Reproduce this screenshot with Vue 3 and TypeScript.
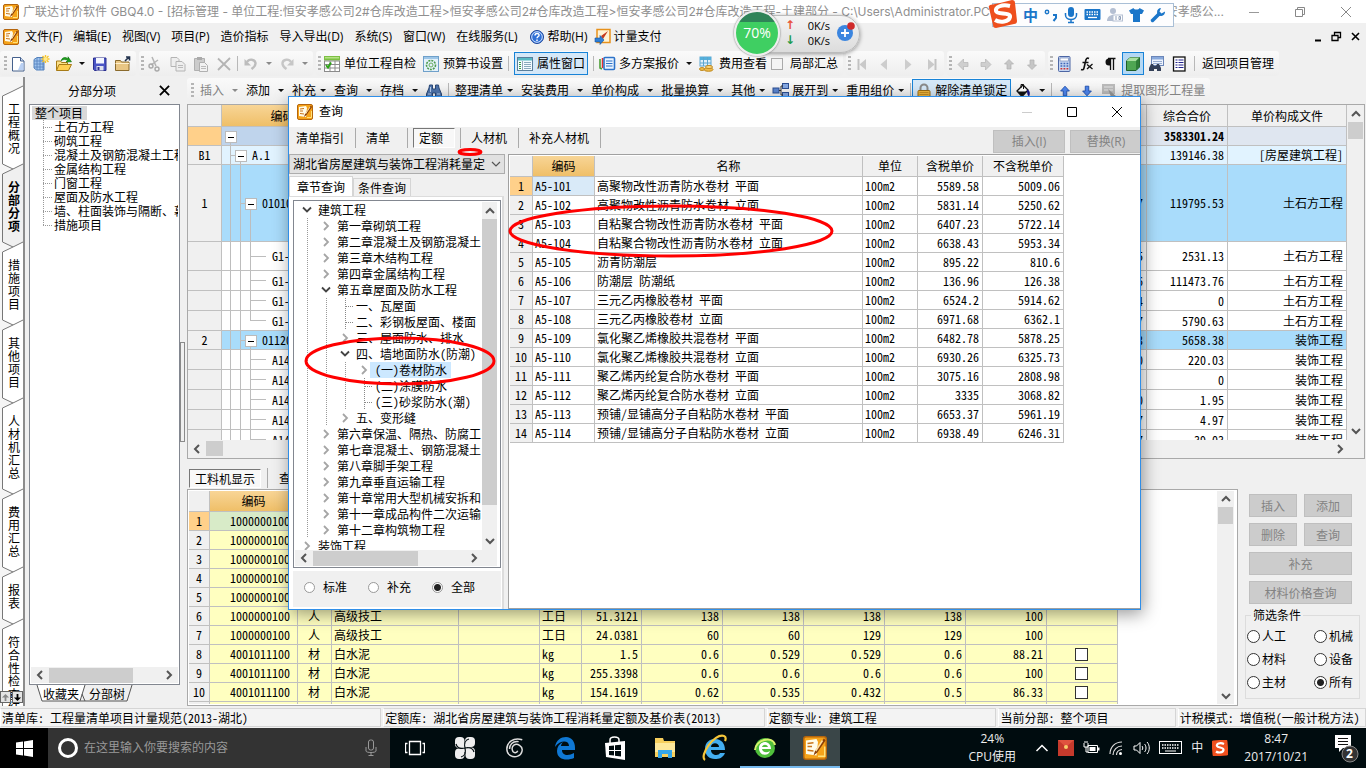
<script setup lang="ts">
import { ref } from 'vue'

const icons: Record<string, string> = {
  app: '<rect x="0.5" y="0.5" width="15" height="15" rx="1.5" fill="#f5a31a" stroke="#b5650c"/><path d="M2 3l7-1 1 2-1 9-7-1z" fill="#fffbe8"/><path d="M3 5l4-.5M3 7l3 0M3 9.500l4 .5" stroke="#c8741a" stroke-width="1"/><path d="M14 1.500l-6 8.500-1 3 2.500-2L15 3z" fill="#8a3f08"/><path d="M13 3l-4.500 7" stroke="#ffe0a0" stroke-width="1"/><path d="M10 13.500h4.500V7" stroke="#ffe27a" fill="none"/>',
  doc: '<path d="M2.500 1.500h8l3.500 3.500v10h-11.500z" fill="#fff" stroke="#44608c"/><path d="M10.500 1.500v3.500H14" fill="#cfdcf2" stroke="#44608c"/><path d="M11 7h2.500v7H8z" fill="#b9d0f3"/>',
  grid: '<path d="M1 3.500l3-2h7v12.500H3.500L1 12z" fill="#9fc4ee" stroke="#5482bd"/><path d="M4 2v12M7 2v12M10 2v12M1 5h10M1 8h10M1 11h10" stroke="#5482bd" stroke-width=".8"/><path d="M12.500-1v8M8.500 3h8M9.500 0l6 6M15.500 0l-6 6" stroke="#f7c52c" stroke-width="1.400"/><circle cx="12.500" cy="3" r="2" fill="#ffe98a"/>',
  open: '<path d="M0.500 5h4l1 1.500h6V14H.5z" fill="#fbe08a" stroke="#a77b16"/><path d="M3 8.500h12.500L12.500 14.500H.5z" fill="#ffcf52" stroke="#a77b16"/><path d="M5 5c1-4 5-4.500 7-2V.8l3.500 5-5.500.2 1.500-1.500C10 3 7 3 5 5z" fill="#1ea01e" stroke="#0c700c" stroke-width=".6"/>',
  save: '<path d="M1.500 2h12.500v12.500H2.500l-1-1z" fill="#4a55c5" stroke="#2b2f8f"/><rect x="4" y="2" width="8" height="5.500" fill="#f4f6ff"/><rect x="4.500" y="10" width="7" height="4.500" fill="#dfe2ee"/><rect x="5.500" y="11" width="2" height="3" fill="#2b2f8f"/>',
  folder: '<path d="M.5 4.500h5l1 1.500h7.500v8.500H.5z" fill="#e9c684" stroke="#8a6a2c"/><path d="M.5 7.500h13.500" stroke="#fff0cc"/><path d="M10 5l4-4M11 1h3.500v3.500" stroke="#24344f" stroke-width="1.600" fill="none"/>',
  cut: '<path d="M5 1l4 9M11 4L4 9" stroke="#b4b4b4" stroke-width="1.500"/><circle cx="4" cy="10" r="2" fill="none" stroke="#a9a9a9" stroke-width="1.400"/><circle cx="10" cy="13" r="2" fill="none" stroke="#a9a9a9" stroke-width="1.400"/>',
  copy: '<path d="M1 1.500h6l2 2v7H1z" fill="#eee" stroke="#b4b4b4"/><path d="M6 5.500h6l3 3v6.500H6z" fill="#eee" stroke="#b4b4b4"/><path d="M8 9.500h5M8 11.500h5" stroke="#bbb"/>',
  paste: '<path d="M1.500 2.500h10v12h-10z" fill="#ccc" stroke="#b0b0b0"/><rect x="4" y="1" width="5" height="3" fill="#aaa"/><path d="M6.500 6.500h5l3 3v6h-8z" fill="#f2f2f2" stroke="#b0b0b0"/><path d="M8 10.500h5M8 12.500h5" stroke="#bbb"/>',
  del: '<path d="M2 2.500l12 11.500M14 2L2 14" stroke="#b4b4b4" stroke-width="1.800"/>',
  undo: '<path d="M4 6c2-3.500 8-3 8.500 1 .3 3-2 4.500-4 6" fill="none" stroke="#bdbdbd" stroke-width="2.400"/><path d="M1.500 3v6.500h6.500z" fill="#bdbdbd"/>',
  redo: '<path d="M12 6c-2-3.500-8-3-8.500 1-.3 3 2 4.500 4 6" fill="none" stroke="#c6c6c6" stroke-width="2.400"/><path d="M14.500 3v6.500h-6.500z" fill="#c6c6c6"/>',
  check: '<rect x="0" y="0" width="16" height="4.500" fill="#7cc043"/><rect x="1" y="1" width="14" height="1.500" fill="#b5e285"/><rect x=".5" y="5" width="15" height="10.500" fill="#fff" stroke="#8b8b8b"/><path d="M6 5v11M11 5v11M0 8.500h16M0 12h16" stroke="#8b8b8b"/><path d="M2 9l2 2.500L7 6.500" stroke="#2ea318" stroke-width="2" fill="none"/>',
  gear: '<rect x=".5" y=".5" width="15" height="15" fill="#e4f1fb" stroke="#6fa0ca"/><rect x="1" y="1" width="14" height="2" fill="#9dc6e8"/><circle cx="8" cy="9" r="4.500" fill="none" stroke="#4c9c4c" stroke-width="1.600" stroke-dasharray="2 1"/><circle cx="8" cy="9" r="2" fill="none" stroke="#66ad5a"/>',
  prop: '<rect x=".5" y="1.500" width="15" height="13" fill="#f4fbff" stroke="#5a7f9c"/><rect x="1" y="2" width="14" height="2.500" fill="#57b9c4"/><path d="M5.500 5v9" stroke="#9ab"/><path d="M2 6.500h2M2 8.500h2M2 10.500h2M2 12.500h2" stroke="#399b46"/><path d="M7 6.500h7M7 8.500h7M7 10.500h7M7 12.500h7" stroke="#8aa9bd"/>',
  multi: '<path d="M1 3v9l2 1" stroke="#4b9e35" stroke-width="1.600" fill="none"/><path d="M3.500 2v10" stroke="#d33" stroke-width="1.500"/><rect x="5" y="1.500" width="10.500" height="12" rx="1" fill="#eaf4ff" stroke="#2d73c9" stroke-width="1.600"/><path d="M7 5h6.500M7 7.500h6.500M7 10h6.500" stroke="#2d73c9" stroke-width="1.200"/>',
  fee: '<rect x="1" y="1" width="11" height="9" fill="#dff0fb" stroke="#5ca6cf"/><rect x="1" y="1" width="11" height="3" fill="#54b0dc"/><path d="M4.500 1v9M8.500 1v9M1 7h11" stroke="#5ca6cf"/><ellipse cx="9.500" cy="13.500" rx="4.500" ry="1.800" fill="#efbb4a" stroke="#c08a20"/><ellipse cx="10" cy="11" rx="3.500" ry="1.600" fill="#f8d277" stroke="#c08a20"/><ellipse cx="3" cy="13" rx="2.500" ry="1.500" fill="#efbb4a" stroke="#c08a20"/>',
  first: '<path d="M4.500 3v11" stroke="#c2c2c2" stroke-width="2"/><path d="M12 3v11L5.500 8.500z" fill="#c9c9c9"/>',
  prev: '<path d="M10 3v11L3.500 8.500z" fill="#cdcdcd"/>',
  next: '<path d="M5 3v11l6.500-5.500z" fill="#cdcdcd"/>',
  last: '<path d="M12.500 3v11" stroke="#c2c2c2" stroke-width="2"/><path d="M5 3v11l6.500-5.500z" fill="#c9c9c9"/>',
  aleft: '<path d="M8.500 3v3.500H13v4H8.500V14L3 8.500z" fill="#cfcfcf" stroke="#b5b5b5" stroke-width=".7"/>',
  aright: '<path d="M7.500 3v3.500H3v4h4.500V14L13 8.500z" fill="#cfcfcf" stroke="#b5b5b5" stroke-width=".7"/>',
  aup: '<path d="M8 3.500l4.500 4.500h-2.500v5H6V8H3.500z" fill="#c6c6c6" stroke="#b0b0b0" stroke-width=".7"/>',
  adown: '<path d="M8 13.500l4.500-4.500h-2.500V4H6v5H3.500z" fill="#c6c6c6" stroke="#b0b0b0" stroke-width=".7"/>',
  calc: '<rect x="2.500" y=".5" width="11.500" height="15" rx="1" fill="#c6d6f2" stroke="#4c66a4"/><rect x="4" y="2" width="8.500" height="3" fill="#fff" stroke="#6f87ba" stroke-width=".7"/><path d="M4.500 7.500h8M4.500 10h8" stroke="#3f66b8" stroke-width="1.400" stroke-dasharray="1.800 1.200"/><path d="M4.500 12.800h8" stroke="#c33" stroke-width="1.400" stroke-dasharray="1.800 1.200"/>',
  fx: '<path d="M10 2.500c-2-1-3 0-3.500 3L5 12c-.5 2-1.500 2-3 1.500M3.500 6.500h6" fill="none" stroke="#111" stroke-width="1.600"/><path d="M8 8.500l5.500 4.500M13.500 8l-5.500 5" stroke="#111" stroke-width="1.300"/>',
  para: '<path d="M13 2.500H7a3.500 3.500 0 0 0 0 7h1V3z" fill="#111"/><path d="M8.500 3v11M11.500 3v11M6 2.500h7.500" stroke="#111" stroke-width="1.300"/>',
  cube: '<path d="M1.500 5l3.500-3.500h9.500v9.500L11 14.500H1.500z" fill="#4fa653" stroke="#1e5f28"/><path d="M1.500 5H11l3.500-3.500H5z" fill="#a8dfa0"/><path d="M11 5v9.500l3.500-3.500V1.500z" fill="#2e7d38"/>',
  find: '<rect x="3.500" y=".5" width="12" height="9" fill="#eef3fc" stroke="#6b86b8"/><rect x="4" y="1" width="11" height="2.500" fill="#88a9dc"/><path d="M5 5.500h9M5 7.500h9" stroke="#97acd0"/><path d="M1 12l2-4h2l1 2h2l1-2h2l2 4v3H9v-2H6v2H1z" fill="#333f57"/>',
  list: '<rect x="2.500" y="1" width="11.500" height="14" fill="#fff" stroke="#111" stroke-width="1.300"/><path d="M4.500 4h2M4.500 6.500h2M4.500 9h2M4.500 11.500h2M7.500 4h5M7.500 6.500h5M7.500 9h5M7.500 11.500h5" stroke="#23238c" stroke-width="1.200"/>',
  bino: '<path d="M3.500 2h3v4h3V2h3l.5 3L15.500 11v3.500h-6V10h-3v4.500h-6V11L3 5z" fill="#4e74ad" stroke="#2a4876"/><path d="M2 11h3M11 11h3M4.500 4v5" stroke="#b9d0ef"/>',
  tree: '<rect x="0" y="5" width="6" height="5" fill="#5b86d1" stroke="#2d4f93"/><rect x="9.500" y=".5" width="6" height="5" fill="#86a9e4" stroke="#2d4f93"/><rect x="9.500" y="9.500" width="6" height="5" fill="#86a9e4" stroke="#2d4f93"/><path d="M6 7.500h2M8 3v9M8 3h2M8 12h2" stroke="#333"/>',
  lock: '<path d="M4.500 8V5a3.500 3.500 0 0 1 7 0v3" fill="none" stroke="#8a8a8a" stroke-width="2"/><rect x="2" y="7.500" width="12" height="8" rx="1" fill="#f0b63c" stroke="#9a6b12"/><path d="M3.500 9.500h9M3.500 11.500h9M3.500 13.500h9" stroke="#c68d20"/>',
  bucket: '<path d="M2 8l6-6 5 5-6 6.500z" fill="#fff" stroke="#111" stroke-width="1.300"/><path d="M6 5V1.500h2.500V6" stroke="#111" fill="none"/><path d="M12 6.500c3 1 3.500 4 2 7-1.500-1-2-3-2-7z" fill="#16168c"/><path d="M2.500 8.500h9L7 13z" fill="#111"/>',
  bup: '<path d="M8 2.500l5 5.500h-3v5.500H6V8H3z" fill="#4e86ee" stroke="#1c4dab"/>',
  bdown: '<path d="M8 13.500L13 8h-3V2.500H6V8H3z" fill="#4e86ee" stroke="#1c4dab"/>',
  pick: '<rect x="0" y="1" width="13" height="10" fill="#bbb"/><path d="M2 4h9M2 7h9" stroke="#e8e8e8"/><path d="M6 6l9 8h-6z" fill="#999"/>',
  help: '<circle cx="8" cy="8" r="6.500" fill="#2f70d6" stroke="#1b459a"/><circle cx="8" cy="8" r="5.300" fill="none" stroke="#cfe1ff"/><path d="M6 6.500c0-3 4.500-2.500 4 0-.3 1-2 1.200-2 2.800M8 10.500v1.500" stroke="#fff" stroke-width="1.500" fill="none"/>',
  pay: '<rect x="2" y=".5" width="13" height="13" fill="#fff3d5" stroke="#e7911b" stroke-width="1.500"/><path d="M4 4l2 3 7-5-5 8z" fill="#c63a1c"/><path d="M0 9h5V6.500l4 4.500-4 4.500V13H0z" fill="#2d7fd8" stroke="#15509b" stroke-width=".6"/>'
}

interface Item { k: 'icon' | 'text' | 'arrow' | 'sep' | 'btn' | 'check'; icon?: string; text?: string; cls?: string }
const ic = (icon: string, cls = ''): Item => ({ k: 'icon', icon, cls })
const tx = (text: string, icon = '', cls = ''): Item => ({ k: 'text', text, icon, cls })
const ar = (cls = ''): Item => ({ k: 'arrow', cls })
const sp: Item = { k: 'sep' }

const bars: Item[][] = [
  [ic('doc'), ic('grid'), ic('open'), ar(), ic('save'), ic('folder')],
  [ic('cut'), ic('copy'), ic('paste'), ic('del'), sp, ic('undo'), ar('dim'), ic('redo'), ar('dim')],
  [tx('单位工程自检', 'check'), tx('预算书设置', 'gear'), sp, { k: 'btn', icon: 'prop', text: '属性窗口' }, sp, tx('多方案报价', 'multi'), ar(), tx('费用查看', 'fee'), { k: 'check', text: '局部汇总' }],
  [ic('first'), ic('prev'), ic('next'), ic('last')],
  [ic('aleft'), ic('aright'), ic('aup'), ic('adown')],
  [ic('calc'), ic('fx'), ic('para'), { k: 'btn', icon: 'cube', cls: 'sq' }, ic('find'), ic('list'), { k: 'sep', cls: 'far' }, tx('返回项目管理')]
]
const editBar: Item[] = [
  tx('插入', '', 'gray'), ar('mid'), tx('添加'), ar(), tx('补充'), ar('tight'), tx('查询'), ar(), tx('存档'), ar(), ic('bino'), sp,
  tx('整理清单'), ar('tight'), tx('安装费用'), ar(), tx('单价构成'), ar(), tx('批量换算'), ar(), tx('其他'), ar('tight'),
  tx('展开到', 'tree'), ar('tight'), tx('重用组价'), ar('tight'), sp, { k: 'btn', icon: 'lock', text: '解除清单锁定', cls: 'lockbtn' },
  ic('bucket'), ar(), sp, ic('bup', 'small'), ic('bdown', 'small'), tx('提取图形工程量', 'pick', 'gray')
]

const menusA = ['文件(F)', '编辑(E)', '视图(V)', '项目(P)', '造价指标', '导入导出(D)', '系统(S)', '窗口(W)', '在线服务(L)']
const sideTabs = ['工程概况', '分部分项', '措施项目', '其他项目', '人材机汇总', '费用汇总', '报表', '符合性检查结果']
const parts = ['土石方工程', '砌筑工程', '混凝土及钢筋混凝土工程', '金属结构工程', '门窗工程', '屋面及防水工程', '墙、柱面装饰与隔断、幕墙', '措施项目']

interface Row { no: string; h: number; cls: string; lvl: number; code: string; tail: string; sum: string; file: string; last?: boolean }
const upper: Row[] = [
  { no: '', h: 19, cls: 'total', lvl: 0, code: '', tail: '', sum: '3583301.24', file: '' },
  { no: 'B1', h: 19, cls: 'pale', lvl: 1, code: 'A.1', tail: '', sum: '139146.38', file: '[房屋建筑工程]' },
  { no: '1', h: 77, cls: 'blue', lvl: 2, code: '010101', tail: '7', sum: '119795.53', file: '土石方工程' },
  { no: '', h: 29, cls: '', lvl: 3, code: 'G1-1', tail: '5', sum: '2531.13', file: '土石方工程' },
  { no: '', h: 20, cls: '', lvl: 3, code: 'G1-2', tail: '6', sum: '111473.76', file: '土石方工程' },
  { no: '', h: 20, cls: '', lvl: 3, code: 'G1-3', tail: '4', sum: '0', file: '土石方工程' },
  { no: '', h: 20, cls: '', lvl: 3, code: 'G1-4', tail: '7', sum: '5790.63', file: '土石方工程', last: true },
  { no: '2', h: 19, cls: 'blue', lvl: 2, code: '011201', tail: '3', sum: '5658.38', file: '装饰工程' },
  { no: '', h: 20, cls: '', lvl: 3, code: 'A14-1', tail: '0', sum: '220.03', file: '装饰工程' },
  { no: '', h: 20, cls: '', lvl: 3, code: 'A14-2', tail: '', sum: '0', file: '装饰工程' },
  { no: '', h: 20, cls: '', lvl: 3, code: 'A14-3', tail: '0', sum: '1.95', file: '装饰工程' },
  { no: '', h: 20, cls: '', lvl: 3, code: 'A14-4', tail: '7', sum: '4.97', file: '装饰工程' },
  { no: '', h: 20, cls: '', lvl: 3, code: 'A14-5', tail: '7', sum: '39.03', file: '装饰工程', last: true }
]

const hidden = (): string[] => ['1000000100', '', '', '', '', '', '', '', '', '', '']
const lower: { cells: string[]; box: boolean }[] = [
  ...[1, 2, 3, 4, 5].map(() => ({ cells: hidden(), box: false })),
  { cells: ['1000000100', '人', '高级技工', '', '工日', '51.3121', '138', '138', '138', '138', '100'], box: false },
  { cells: ['1000000100', '人', '高级技工', '', '工日', '24.0381', '60', '60', '129', '129', '100'], box: false },
  { cells: ['4001011100', '材', '白水泥', '', 'kg', '1.5', '0.6', '0.529', '0.529', '0.6', '88.21'], box: true },
  { cells: ['4001011100', '材', '白水泥', '', 'kg', '255.3398', '0.6', '0.6', '0.6', '0.6', '100'], box: true },
  { cells: ['4001011100', '材', '白水泥', '', 'kg', '154.1619', '0.62', '0.535', '0.432', '0.5', '86.33'], box: true },
  { cells: ['', '', '', '', '', '', '', '', '', '', ''], box: false }
]

interface Node { t: string; lvl: number; s: 'open' | 'shut' | 'leaf'; sel?: boolean }
const nodes: Node[] = [
  { t: '建筑工程', lvl: 0, s: 'open' },
  { t: '第一章砌筑工程', lvl: 1, s: 'shut' },
  { t: '第二章混凝土及钢筋混凝土', lvl: 1, s: 'shut' },
  { t: '第三章木结构工程', lvl: 1, s: 'shut' },
  { t: '第四章金属结构工程', lvl: 1, s: 'shut' },
  { t: '第五章屋面及防水工程', lvl: 1, s: 'open' },
  { t: '一、瓦屋面', lvl: 2, s: 'leaf' },
  { t: '二、彩钢板屋面、楼面', lvl: 2, s: 'leaf' },
  { t: '三、屋面防水、排水', lvl: 2, s: 'shut' },
  { t: '四、墙地面防水(防潮)', lvl: 2, s: 'open' },
  { t: '(一)卷材防水', lvl: 3, s: 'shut', sel: true },
  { t: '(二)涂膜防水', lvl: 3, s: 'leaf' },
  { t: '(三)砂浆防水(潮)', lvl: 3, s: 'leaf' },
  { t: '五、变形缝', lvl: 2, s: 'shut' },
  { t: '第六章保温、隔热、防腐工', lvl: 1, s: 'shut' },
  { t: '第七章混凝土、钢筋混凝土', lvl: 1, s: 'shut' },
  { t: '第八章脚手架工程', lvl: 1, s: 'shut' },
  { t: '第九章垂直运输工程', lvl: 1, s: 'shut' },
  { t: '第十章常用大型机械安拆和', lvl: 1, s: 'shut' },
  { t: '第十一章成品构件二次运输', lvl: 1, s: 'shut' },
  { t: '第十二章构筑物工程', lvl: 1, s: 'shut' },
  { t: '装饰工程', lvl: 0, s: 'shut' }
]

const quota: [string, string, string, string][] = [
  ['A5-101', '高聚物改性沥青防水卷材 平面', '5589.58', '5009.06'],
  ['A5-102', '高聚物改性沥青防水卷材 立面', '5831.14', '5250.62'],
  ['A5-103', '自粘聚合物改性沥青防水卷材 平面', '6407.23', '5722.14'],
  ['A5-104', '自粘聚合物改性沥青防水卷材 立面', '6638.43', '5953.34'],
  ['A5-105', '沥青防潮层', '895.22', '810.6'],
  ['A5-106', '防潮层 防潮纸', '136.96', '126.38'],
  ['A5-107', '三元乙丙橡胶卷材 平面', '6524.2', '5914.62'],
  ['A5-108', '三元乙丙橡胶卷材 立面', '6971.68', '6362.1'],
  ['A5-109', '氯化聚乙烯橡胶共混卷材 平面', '6482.78', '5878.25'],
  ['A5-110', '氯化聚乙烯橡胶共混卷材 立面', '6930.26', '6325.73'],
  ['A5-111', '聚乙烯丙纶复合防水卷材 平面', '3075.16', '2808.98'],
  ['A5-112', '聚乙烯丙纶复合防水卷材 立面', '3335', '3068.82'],
  ['A5-113', '预铺/显铺高分子自粘防水卷材 平面', '6653.37', '5961.19'],
  ['A5-114', '预铺/显铺高分子自粘防水卷材 立面', '6938.49', '6246.31']
]

const dlgTabs = ['清单指引', '清单', '定额', '人材机', '补充人材机']
const scope = ref('全部')
const filter = ref('所有')
const filters = ['人工', '机械', '材料', '设备', '主材', '所有']
const status = ['清单库: 工程量清单项目计量规范(2013-湖北)', '定额库: 湖北省房屋建筑与装饰工程消耗量定额及基价表(2013)', '定额专业: 建筑工程', '当前分部: 整个项目', '计税模式: 增值税(一般计税方法)']
const tabHeight = (t: string): number => t.length * 13 + 26
</script>

<template>
  <div class="app">
    <header class="title">
      <svg class="ic" viewBox="0 0 16 16" v-html="icons.app"></svg>
      <span class="title-main">广联达计价软件 GBQ4.0 - [招标管理 - 单位工程:恒安孝感公司2#仓库改造工程&gt;恒安孝感公司2#仓库改造工程&gt;恒安孝感公司2#仓库改造工程-土建部分 - C:\Users\Administrator.PC</span>
      <span class="title-end">安孝感公...</span>
      <span class="wbtns">
        <button aria-label="最小化"><svg viewBox="0 0 12 12"><path d="M1 6.500h10" stroke="#999" /></svg></button>
        <button aria-label="还原"><svg viewBox="0 0 12 12"><path d="M1.500 3.500h7v7h-7zM3.500 3.500v-2h7v7h-2" fill="none" stroke="#888" /></svg></button>
        <button aria-label="关闭"><svg viewBox="0 0 12 12"><path d="M1 1l10 10M11 1L1 11" stroke="#888" /></svg></button>
      </span>
    </header>

    <nav class="menu">
      <svg class="ic" viewBox="0 0 16 16" v-html="icons.app"></svg>
      <button v-for="m in menusA" :key="m">{{ m }}</button>
      <button><svg class="ic" viewBox="0 0 16 16" v-html="icons.help"></svg>帮助(H)</button>
      <button class="pay"><svg class="ic" viewBox="0 0 16 16" v-html="icons.pay"></svg>计量支付</button>
      <span class="mdi">
        <svg viewBox="0 0 48 12"><path d="M3 9.500h6" stroke="#000" stroke-width="2" /><path d="M20 4.500h6v5h-6zM22.500 4V1.500h6v5h-2" fill="none" stroke="#000" stroke-width="1.300" /><path d="M40 2l7 7M47 2l-7 7" stroke="#000" stroke-width="1.600" /></svg>
      </span>
    </nav>

    <div class="bar">
      <div v-for="(g, gi) in bars" :key="gi" class="grp">
        <i class="grip"></i>
        <template v-for="(it, i) in g" :key="i">
          <button v-if="it.k === 'icon'" class="tool" :aria-label="it.icon"><svg class="ic" viewBox="0 0 16 16" v-html="icons[it.icon!]"></svg></button>
          <button v-else-if="it.k === 'text'" class="tool"><svg v-if="it.icon" class="ic" viewBox="0 0 16 16" v-html="icons[it.icon]"></svg>{{ it.text }}</button>
          <button v-else-if="it.k === 'btn'" class="tool on" :class="it.cls" :aria-label="it.icon"><svg class="ic" viewBox="0 0 16 16" v-html="icons[it.icon!]"></svg>{{ it.text }}</button>
          <label v-else-if="it.k === 'check'" class="chk"><input type="checkbox" />{{ it.text }}</label>
          <i v-else :class="[it.k, it.cls]"></i>
        </template>
      </div>
    </div>

    <div class="body">
      <aside class="side">
        <button v-for="(t, i) in sideTabs" :key="t" class="stab" :class="{ cur: i === 1 }" :style="{ height: tabHeight(t) + 'px' }">
          <svg width="25" :height="tabHeight(t)"><path :d="`M23 -5L13 0L2.500 5V${tabHeight(t) - 5}L13 ${tabHeight(t)}L23 ${tabHeight(t) + 5}`" /></svg>
          <span>{{ t }}</span>
        </button>
        <div class="nudge"><button disabled aria-label="上"><svg viewBox="0 0 10 10"><path d="M5 1l4 4H6v4H4V5H1z" fill="#888" /></svg></button><button aria-label="下"><svg viewBox="0 0 10 10"><path d="M5 9l4-4H6V1H4v4H1z" /></svg></button></div>
      </aside>

      <section class="parts">
        <div class="parts-head"><span>分部分项</span><button aria-label="关闭"><svg viewBox="0 0 12 12"><path d="M1 1l10 10M11 1L1 11" stroke="#000" stroke-width="2" /></svg></button></div>
        <div class="parts-box">
          <ul class="ptree">
            <li class="root"><span>整个项目</span></li>
            <li v-for="p in parts" :key="p">{{ p }}</li>
          </ul>
          <div class="hs"><svg class="ch" viewBox="0 0 8 8"><path d="M6 0L2 4l4 4" /></svg><i class="th1"></i><svg class="ch" viewBox="0 0 8 8"><path d="M2 0l4 4-4 4" /></svg></div>
        </div>
        <div class="ptabs">
          <svg width="110" height="18"><path d="M51 16h47l5-16" fill="#efefef" stroke="#555" /><path d="M8 0l5 16h38l5-16" fill="#fff" stroke="#555" /><path d="M53 9l3 7" stroke="#555" /></svg>
          <button>收藏夹</button><button>分部树</button>
        </div>
      </section>

      <div class="split"><i></i></div>

      <main class="work">
        <div class="bar edit">
          <div class="grp">
            <i class="grip"></i>
            <template v-for="(it, i) in editBar" :key="i">
              <button v-if="it.k === 'icon'" class="tool" :class="it.cls" :aria-label="it.icon"><svg class="ic" viewBox="0 0 16 16" v-html="icons[it.icon!]"></svg></button>
              <button v-else-if="it.k === 'text'" class="tool" :class="it.cls"><svg v-if="it.icon" class="ic" viewBox="0 0 16 16" v-html="icons[it.icon]"></svg>{{ it.text }}</button>
              <button v-else-if="it.k === 'btn'" class="tool on" :class="it.cls"><svg class="ic" viewBox="0 0 16 16" v-html="icons[it.icon!]"></svg>{{ it.text }}</button>
              <i v-else :class="[it.k, it.cls]"></i>
            </template>
          </div>
        </div>

        <div class="upper">
          <div class="upper-main">
            <div class="clip">
              <table class="grid g-up">
                <colgroup><col class="w34" /><col class="w122" /><col /><col class="w81" /><col class="w119" /></colgroup>
                <thead><tr><th></th><th class="hot">编码</th><th></th><th>综合合价</th><th>单价构成文件</th></tr></thead>
                <tbody>
                  <tr v-for="(r, i) in upper" :key="i" :class="r.cls" :style="{ height: r.h + 'px' }">
                    <th>{{ r.no }}</th>
                    <td class="code" :class="['l' + r.lvl, { last: r.last }]"><i v-if="r.lvl < 3" class="minus"></i>{{ r.code }}</td>
                    <td class="r">{{ r.tail }}</td>
                    <td class="r">{{ r.sum }}</td>
                    <td class="r">{{ r.file }}</td>
                  </tr>
                </tbody>
              </table>
            </div>
            <div class="vs"><svg class="ch" viewBox="0 0 8 8"><path d="M0 6l4-4 4 4" /></svg><i class="th2"></i><span></span><svg class="ch" viewBox="0 0 8 8"><path d="M0 2l4 4 4-4" /></svg></div>
          </div>
          <div class="hs up"><svg class="ch" viewBox="0 0 8 8"><path d="M6 0L2 4l4 4" /></svg><i class="th3"></i><svg class="ch" viewBox="0 0 8 8"><path d="M2 0l4 4-4 4" /></svg></div>
        </div>

        <div class="mid-tabs"><button class="sunk">工料机显示</button><i></i><button>查看单价构成</button></div>

        <div class="lower">
          <div class="lower-main">
            <div class="clip">
              <table class="grid g-low">
                <colgroup><col class="w21" /><col class="w88" /><col class="w34" /><col class="w127" /><col class="w81" /><col class="w42" /><col class="w60" /><col v-for="n in 5" :key="n" class="w81" /><col class="w71" /></colgroup>
                <thead><tr><th></th><th class="hot">编码</th><th v-for="n in 11" :key="n"></th></tr></thead>
                <tbody>
                  <tr v-for="(r, i) in lower" :key="i" :class="{ first: i === 0 }">
                    <th>{{ i < 10 ? i + 1 : '' }}</th>
                    <td v-for="(c, j) in r.cells" :key="j" :class="{ r: j === 0 || j > 4, wide: j === 0, c: j === 1 }">{{ c }}</td>
                    <td class="c"><input v-if="r.box" type="checkbox" aria-label="暂估" /></td>
                  </tr>
                </tbody>
              </table>
            </div>
            <div class="vs low"><svg class="ch" viewBox="0 0 8 8"><path d="M0 6l4-4 4 4" /></svg><i class="th2"></i><span></span><svg class="ch" viewBox="0 0 8 8"><path d="M0 2l4 4 4-4" /></svg></div>
          </div>
          <div class="ops">
            <div class="btns">
              <button disabled>插入</button><button disabled>添加</button><button disabled>删除</button><button disabled>查询</button>
              <button disabled class="full">补充</button><button disabled class="full">材料价格查询</button>
            </div>
            <fieldset>
              <legend>筛选条件</legend>
              <label v-for="f in filters" :key="f"><input v-model="filter" type="radio" name="filter" :value="f" />{{ f }}</label>
            </fieldset>
          </div>
        </div>
      </main>
    </div>

    <footer class="status"><span v-for="(s, i) in status" :key="s" :class="'s' + i">{{ s }}</span></footer>

    <div class="task">
      <button class="start" aria-label="开始"><svg width="17" height="17" viewBox="0 0 17 17"><path d="M0 2.500l7-1v6.500H0zM8 1.400L17 0v8H8zM0 9h7v6.500l-7-1zM8 9h9v8l-9-1.400z" fill="#fff" /></svg></button>
      <div class="search">
        <svg width="22" height="22" viewBox="0 0 22 22"><circle cx="11" cy="11" r="8.500" fill="none" stroke="#fff" stroke-width="3" /></svg>
        <input type="text" placeholder="在这里输入你要搜索的内容" aria-label="搜索" />
        <svg width="12" height="18" viewBox="0 0 12 18"><rect x="3.500" y="1" width="5" height="10" rx="2" fill="none" stroke="#999" /><path d="M1 8v4c0 2 10 2 10 0V8M6 14v3M3.500 16.500h5" fill="none" stroke="#999" /></svg>
      </div>
      <button class="slot" aria-label="任务视图"><svg width="20" height="18" viewBox="0 0 20 18"><path d="M4.500 2.500h11v13h-11zM2.500 4.500h-2v9h2M17.500 4.500h2v9h-2" fill="none" stroke="#fff" stroke-width="1.300" /></svg></button>
      <button class="slot" aria-label="风车"><svg width="22" height="24" viewBox="0 0 22 24"><g fill="#eee"><rect x="1" y="1" width="9.500" height="11" rx="4" /><rect x="11" y="1" width="10" height="10" rx="4" /><rect x="1" y="12.500" width="9.500" height="10.500" rx="4" /><rect x="11.500" y="11.500" width="9.500" height="11.500" rx="4" /><rect x="7" y="8" width="8" height="8" /></g><path d="M11 12C10 8 11 4 15 3M11 12c4-1 8 0 9 4M11 12c1 4 0 8-4 9M11 12c-4 1-8 0-9-4" stroke="#000c0f" fill="none" stroke-width="1.200" /></svg></button>
      <button class="slot" aria-label="螺旋"><svg width="20" height="22" viewBox="0 0 22 24"><path d="M19 3C9 0 2 6 2 13s7 10 12 8 7-9 2-12-9 1-8 5 5 4 6 1M15 5C8 4 5 9 5 13" fill="none" stroke="#ddd" stroke-width="1.600" /></svg></button>
      <button class="slot" aria-label="Edge"><svg width="22" height="24" viewBox="0 0 22 24"><path d="M1 11C2 4 7 1 12 1c6 0 9 5 9 11v2H8c0 6 7 6 12 3v5c-7 3-17 2-17-7 0-4 2-7 6-9-1 1-2 3-2 4h8c0-6-9-6-14 1z" fill="#0f78d4" /></svg></button>
      <button class="slot" aria-label="商店"><svg width="22" height="26" viewBox="0 0 22 26"><path d="M6 8V5c0-4 9-4 9 0v3" fill="none" stroke="#fff" stroke-width="1.500" /><path d="M1 8l20-2v19L2 22z" fill="#fff" /><path d="M5 11l5-.5v4.500H5zM11 10.300l6-.6V15h-6zM5 16h5v4.500L5 20zM11 16h6v5.500l-6-.7z" fill="#000c0f" /></svg></button>
      <button class="slot" aria-label="文件夹"><svg width="22" height="22" viewBox="0 0 22 22"><path d="M1 1h8l1 3h11v16H1z" fill="#f6cf5d" /><path d="M1 6h20v9H1z" fill="#fde89b" /><path d="M4 21v-8h14v8h-4v-4H8v4z" fill="#35a6e8" /></svg></button>
      <button class="slot" aria-label="IE"><svg width="26" height="28" viewBox="0 0 26 28"><path d="M3 15C3 8 8 5 13 5c7 0 10 5 10 11H9c0 6 8 6 9 3h5c-2 5-6 6-10 6-6 0-10-4-10-10zm6-2h8c0-5-8-5-8 0z" fill="#43aef0" /><path d="M3 26C-3 22 12-1 22 2c3 1 1 5 1 5" fill="none" stroke="#f5c63a" stroke-width="2.200" /></svg></button>
      <button class="slot run" aria-label="浏览器"><svg width="24" height="26" viewBox="0 0 24 26"><circle cx="12" cy="13" r="10" fill="#4fbf3b" /><path d="M2 15C2 5 20 0 22 10" stroke="#d7f26c" stroke-width="2" fill="none" /><path d="M6 13c0-8 12-8 12 1H9c1 4 5 4 8 2-2 6-11 5-11-3zm3-1h6c-1-3-5-3-6 0z" fill="#fff" /></svg></button>
      <button class="slot run act" aria-label="广联达"><svg width="24" height="24" viewBox="0 0 16 16" v-html="icons.app"></svg></button>
      <span class="push"></span>
      <div class="cpu">24%<br />CPU使用</div>
      <div class="tray">
        <svg width="14" height="10" viewBox="0 0 14 10"><path d="M1.500 8L7 2.500 12.500 8" fill="none" stroke="#fff" stroke-width="1.500" /></svg>
        <svg width="16" height="20" viewBox="0 0 16 20"><rect y="2" width="16" height="16" fill="#c63a2c" /><path d="M0 2l8 7 8-7" fill="#e0533f" /><circle cx="8" cy="9" r="2" fill="#f7ce6a" /></svg>
        <svg width="17" height="14" viewBox="0 0 17 14"><path d="M5 4.500h9.500v7H5z" fill="none" stroke="#fff" /><path d="M15 6.500h1.500v3H15M6.500 6h6v4h-6z" fill="#fff" /><path d="M1 2v4h4V2M2 0v2M4 0v2M3 6v5h2" fill="none" stroke="#fff" /></svg>
        <svg width="15" height="15" viewBox="0 0 15 15"><path d="M1 13C1 6 6 1 13 1M4 14c0-5 4-9 9-9M7.500 14c0-3 2-5 5.500-5.500" fill="none" stroke="#ddd" stroke-width="1.200" /><circle cx="11.500" cy="12.500" r="1.500" fill="#fff" /></svg>
        <svg width="17" height="14" viewBox="0 0 17 14"><path d="M1 5h2.500L7 1.500v11L3.500 9H1z" fill="none" stroke="#fff" /><path d="M9 5c1 1 1 3 0 4M11.500 3c2 2 2 6 0 8M14 1c3 3 3 9 0 12" fill="none" stroke="#fff" /></svg>
        <svg width="23" height="14" viewBox="0 0 23 14"><rect x=".5" y=".5" width="22" height="12" fill="none" stroke="#fff" /><path d="M3 4h17M3 7h17" stroke="#fff" stroke-width="1.500" stroke-dasharray="1.500 1" /><path d="M6 10h11" stroke="#fff" /></svg>
        <span>中</span>
        <svg width="16" height="16" viewBox="0 0 16 16"><rect width="16" height="16" rx="2" fill="#f0501e" transform="rotate(-5 8 8)" /><path d="M12 4C8 2 4 4 5 6s7 1 6.500 4S6 13 4 11.500" fill="none" stroke="#fff" stroke-width="2.200" /></svg>
      </div>
      <div class="clock">8:47<br />2017/10/21</div>
      <button class="note" aria-label="通知"><svg width="26" height="32" viewBox="0 0 26 32"><path d="M1 3h16v13H9l-4 4v-4H1z" fill="#fff" /><path d="M4 6.500h10M4 9.500h10M4 12.500h10" stroke="#111" /><circle cx="16" cy="22" r="8" fill="#333" stroke="#888" /></svg><b>2</b></button>
    </div>

    <div class="dlg" role="dialog" aria-label="查询">
      <div class="dlg-title">
        <svg class="ic" viewBox="0 0 16 16" v-html="icons.app"></svg><span>查询</span>
        <span class="dbtns">
          <button disabled aria-label="最小化"><svg viewBox="0 0 12 12"><path d="M1 6.500h10" stroke="#ccc" /></svg></button>
          <button aria-label="最大化"><svg viewBox="0 0 12 12"><path d="M1.500 1.500h9v9h-9z" fill="none" stroke="#000" /></svg></button>
          <button aria-label="关闭"><svg viewBox="0 0 12 12"><path d="M1 1l10 10M11 1L1 11" stroke="#000" /></svg></button>
        </span>
      </div>
      <div class="dlg-tabs">
        <button v-for="(t, i) in dlgTabs" :key="t" :class="'d' + i">{{ t }}</button>
        <span class="dlg-act"><button disabled>插入(I)</button><button disabled>替换(R)</button></span>
      </div>
      <div class="dlg-body">
        <div class="dleft">
          <div class="combo"><select aria-label="定额库"><option>湖北省房屋建筑与装饰工程消耗量定</option></select><svg class="ch thin" viewBox="0 0 8 8"><path d="M0 2l4 4 4-4" /></svg></div>
          <div class="qtabs"><button class="cur">章节查询</button><button>条件查询</button></div>
          <div class="page">
            <div class="tbox">
              <div class="tmain">
                <ul class="qtree">
                  <li v-for="n in nodes" :key="n.t">
                    <i v-for="g in n.lvl" :key="g" class="guide"></i>
                    <svg v-if="n.s === 'open'" class="tw" viewBox="0 0 19 16"><path d="M5 5.500l4 4 4-4" fill="none" stroke="#444" stroke-width="1.800" /></svg>
                    <svg v-else-if="n.s === 'shut'" class="tw" viewBox="0 0 19 16"><path d="M7 4l4 4-4 4" fill="none" stroke="#a5a5a5" stroke-width="1.800" /></svg>
                    <svg v-else class="tw" viewBox="0 0 19 16"><path d="M9.500 0v16M10 8.500h8" fill="none" stroke="#888" stroke-dasharray="1 1" /></svg>
                    <span :class="{ sel: n.sel }">{{ n.t }}</span>
                  </li>
                </ul>
                <div class="vs dl"><svg class="ch" viewBox="0 0 8 8"><path d="M0 6l4-4 4 4" /></svg><i class="th4"></i><span></span><svg class="ch" viewBox="0 0 8 8"><path d="M0 2l4 4 4-4" /></svg></div>
              </div>
              <div class="hs dl"><svg class="ch" viewBox="0 0 8 8"><path d="M6 0L2 4l4 4" /></svg><i class="th5"></i><svg class="ch" viewBox="0 0 8 8"><path d="M2 0l4 4-4 4" /></svg></div>
            </div>
            <div class="scope"><label v-for="s in ['标准', '补充', '全部']" :key="s"><input v-model="scope" type="radio" name="scope" :value="s" />{{ s }}</label></div>
          </div>
        </div>
        <div class="dright">
          <table class="grid g-q">
            <colgroup><col class="w23" /><col class="w62" /><col class="w268" /><col class="w55" /><col class="w65" /><col class="w81" /></colgroup>
            <thead><tr><th></th><th class="hot">编码</th><th>名称</th><th>单位</th><th>含税单价</th><th>不含税单价</th></tr></thead>
            <tbody>
              <tr v-for="(q, i) in quota" :key="q[0]" :class="{ first: i === 0 }"><th>{{ i + 1 }}</th><td>{{ q[0] }}</td><td>{{ q[1] }}</td><td>100m2</td><td class="r">{{ q[2] }}</td><td class="r">{{ q[3] }}</td></tr>
            </tbody>
          </table>
        </div>
      </div>
      <svg class="marks" width="560" height="300"><g fill="none" stroke="#f00" stroke-width="3"><ellipse cx="111" cy="264" rx="94" ry="23" /><ellipse cx="382" cy="134" rx="161" ry="25" /><ellipse cx="181" cy="55" rx="11" ry="2.500" /></g></svg>
    </div>

    <div class="speed">
      <div class="ball">70%</div>
      <div class="rates"><span><em class="u">↑</em>0K/s</span><span><em>↓</em>0K/s</span></div>
      <svg width="22" height="22" viewBox="0 0 22 22"><circle cx="10" cy="12" r="8" fill="#3b85df" /><path d="M10 8v8M6 12h8" stroke="#fff" stroke-width="1.800" /><circle cx="16" cy="5" r="3.800" fill="#cf2a2a" /></svg>
    </div>

    <div class="ime">
      <svg class="logo" width="30" height="28" viewBox="0 0 30 28"><path d="M2 5Q13 3 24 0q3 0 3 3l2 18q0 3-3 3L8 28q-3 0-3-3L1 8Q0 6 2 5z" fill="#ee4f1d" /><path d="M22 6C14 4 7 7 8 11s15 1 14 6-10 6-15 3" fill="none" stroke="#fff" stroke-width="4" /></svg>
      <b>中</b>
      <svg width="14" height="16" viewBox="0 0 14 16"><circle cx="3" cy="5" r="1.700" fill="none" stroke="#1b76c9" stroke-width="1.400" /><path d="M9 8h3v3l-2.500 3" fill="none" stroke="#1b76c9" stroke-width="2" /></svg>
      <svg width="14" height="18" viewBox="0 0 14 18"><rect x="4" y="1" width="6" height="10" rx="3" fill="#1b76c9" /><path d="M1.500 7v2c0 6 11 6 11 0V7M7 13v4M4 16.500h6" fill="none" stroke="#1b76c9" stroke-width="1.500" /></svg>
      <svg width="17" height="14" viewBox="0 0 17 14"><rect x=".5" y="1" width="16" height="11" rx="1" fill="#1b76c9" /><path d="M2.500 4h12M2.500 6.500h12" stroke="#fff" stroke-width="1.400" stroke-dasharray="1.500 1" /><path d="M4 9.500h9" stroke="#fff" stroke-width="1.300" /></svg>
      <svg width="16" height="16" viewBox="0 0 16 16"><circle cx="6" cy="4" r="3" fill="#b4bfd2" /><path d="M0 14c0-8 12-8 12 0z" fill="#b4bfd2" /><rect x="6" y="8" width="9.500" height="6" fill="#fff" stroke="#b4bfd2" /><path d="M9 9v4M12 9.500h1.500v3H12z" stroke="#8f9fba" fill="none" /></svg>
      <svg width="15" height="14" viewBox="0 0 15 14"><path d="M4.500 0C5 2 10 2 10.500 0L15 2.500 13 6h-2v8H4V6H2L0 2.500z" fill="#1b76c9" /></svg>
      <svg width="16" height="16" viewBox="0 0 16 16"><path d="M2.500 13.500L9 7" stroke="#1b76c9" stroke-width="3.500" stroke-linecap="round" /><path d="M15 4.500a4 4 0 1 1-4-3.500L9.500 4.500l2 2z" fill="#1b76c9" /></svg>
    </div>
  </div>
</template>

<style>
html, body { margin: 0; overflow: hidden; }
</style>

<style scoped>
* { box-sizing: border-box; }
.app { position: relative; display: flex; flex-direction: column; height: 100vh; min-height: 600px; overflow: hidden; background: #f0f0f0; color: #000; font: 12px/16px "Noto Sans Mono CJK SC", "Noto Sans CJK SC", sans-serif; white-space: nowrap; }
button { margin: 0; padding: 0; border: 0; background: none; color: inherit; font: inherit; white-space: nowrap; }
svg { display: block; flex: none; }
ul { margin: 0; padding: 0; list-style: none; }
.ic { width: 16px; height: 16px; overflow: visible; }
.title, .menu, .bar, .dlg-title, .dlg-act, .task, .speed { font-family: "Open Sans", "Noto Sans CJK SC", sans-serif; }

.title { display: flex; align-items: center; height: 23px; padding-left: 3px; background: #fff; color: #8f8f8f; font-family: Inter, "Noto Sans CJK SC", sans-serif; flex: none; }
.title-main { margin-left: 4px; flex: 1; overflow: hidden; }
.title-end { margin-right: 24px; }
.wbtns { display: flex; gap: 34px; padding-right: 14px; }
.wbtns svg, .dbtns svg { width: 12px; height: 12px; }

.menu { display: flex; align-items: center; gap: 11px; height: 27px; padding-left: 3px; flex: none; }
.menu > .ic { margin-right: -5px; }
.menu button { display: flex; align-items: center; gap: 3px; }
.menu .pay { margin-left: -4px; }
.mdi { margin: 0 6px 0 auto; }
.mdi svg { width: 48px; height: 12px; }

.bar { display: flex; align-items: center; height: 27px; gap: 3px; flex: none; }
.grp { display: flex; align-items: center; gap: 7px; height: 25px; padding: 0 5px 0 2px; border-radius: 3px; background: linear-gradient(#fafafa, #eee); }
.bar > .grp:first-child { padding-left: 4px; }
.grip { width: 3px; height: 15px; margin-right: -4px; flex: none; background: repeating-linear-gradient(#b5b5b5 0 2px, transparent 2px 4px); }
.tool { display: flex; align-items: center; gap: 4px; }
.on { height: 23px; padding: 0 2px; border: 1px solid #1883d7; background: #d5e8f8; }
.sq { padding: 0 2px; margin: 0 -3px; background: #b5d8f4; }
.sep { width: 1px; height: 15px; margin: 0 -2px; background: #b8b8b8; flex: none; }
.sep.far { margin: 0; }
.arrow { width: 6px; height: 3px; flex: none; background: #111; clip-path: polygon(0 0, 100% 0, 50% 100%); }
.arrow.dim, .arrow.mid { background: #8a8a8a; }
.chk { display: flex; align-items: center; gap: 7px; margin-left: -3px; }
.chk input { appearance: none; width: 12px; height: 12px; margin: 0; border: 1px solid #aaa; background: #f4f4f4; }
.edit .grp { gap: 8px; }
.edit .tool { gap: 3px; }
.edit .grip { margin-right: -2px; }
.edit .tight { margin-left: -4px; }
.gray { color: #838383; }
.small .ic { width: 14px; }
.edit .lockbtn { padding: 0 3px; margin: 0 -4px 0 -5px; }

.body { display: flex; flex: 1; min-height: 0; }
.side { position: relative; width: 25px; padding-top: 14px; overflow: hidden; border-right: 2px solid #8c8c8c; background: #f5f5f5; flex: none; }
.stab { display: block; position: relative; width: 25px; padding: 11px 0 0 8px; text-align: left; }
.stab svg { position: absolute; left: 0; top: 0; overflow: visible; }
.stab path { fill: #fff; stroke: #777; }
.stab.cur { font-weight: bold; }
.stab.cur path { fill: #f0f0f0; }
.stab span { display: block; position: relative; width: 12px; height: 100%; line-height: 13px; white-space: normal; word-break: break-all; }
.nudge { position: absolute; left: 0; bottom: 3px; display: flex; gap: 1px; }
.nudge button { width: 11px; height: 12px; border: 1px solid #666; background: #e4e4e4; }
.nudge svg { width: 9px; height: 9px; }

.parts { display: flex; flex-direction: column; width: 155px; padding-left: 4px; flex: none; }
.parts-head { display: flex; align-items: center; justify-content: space-between; height: 27px; padding: 0 10px 0 39px; flex: none; }
.parts-head svg { width: 11px; height: 11px; }
.parts-box { display: flex; flex-direction: column; flex: 1; min-height: 0; overflow: hidden; border: 1px solid #828790; background: #fff; }
.ptree { flex: 1; padding: 1px 0 0 2px; margin-right: 1px; overflow: hidden; line-height: 14px; }
.ptree li { margin-left: 11px; padding-left: 11px; height: 14px; background: repeating-linear-gradient(#999 0 1px, transparent 1px 2px) 0 0 / 1px 14px no-repeat, repeating-linear-gradient(90deg, #999 0 1px, transparent 1px 2px) 0 7px / 9px 1px no-repeat; }
.ptree li:last-child { background-size: 1px 7px, 9px 1px; }
.ptree .root { margin: 0; padding: 0; height: 14px; background: none; }
.root span { display: inline-block; padding: 0 4px 0 3px; background: #d9d9d9; }
.hs { display: flex; align-items: center; height: 16px; padding: 0 5px; margin: 0 1px 1px; background: #f0f0f0; flex: none; }
.hs .ch:last-child { margin-left: auto; }
.ch { width: 8px; height: 8px; fill: none; stroke: #555; stroke-width: 2; overflow: visible; }
.thin { stroke-width: 1.200; }
.th1, .th3, .th5 { height: 15px; margin-left: 5px; background: #cdcdcd; }
.th1 { width: 84px; }
.th3 { width: 17px; }
.th5 { width: 105px; }
.ptabs { position: relative; display: flex; gap: 10px; height: 21px; padding: 1px 0 0 14px; align-items: flex-start; flex: none; }
.ptabs svg { position: absolute; left: 0; top: 0; }
.ptabs button { position: relative; }

.split { display: flex; align-items: center; width: 7px; flex: none; }
.split i { width: 5px; height: 100px; border: 1px solid #8a8a8a; }

.work { display: flex; flex-direction: column; flex: 1; min-width: 0; }
.upper { display: flex; flex-direction: column; flex: none; height: calc(46vh + 2px); margin-right: 1px; border: 1px solid #a9a9a9; background: #f0f0f0; }
.upper-main, .lower-main { display: flex; flex: 1; min-height: 0; }
.clip { flex: 1; min-width: 0; overflow: hidden; background: #fff; }
.hs.up { height: 17px; margin: 0 0 1px; padding-right: 20px; }
.vs { display: flex; flex-direction: column; align-items: center; width: 17px; padding: 5px 0; background: #f0f0f0; flex: none; }
.vs span { flex: 1; }
.th2, .th4 { width: 15px; height: 17px; margin-top: 4px; background: #cdcdcd; flex: none; }

.grid { border-collapse: separate; border-spacing: 0; table-layout: fixed; }
.grid th, .grid td { padding: 0 3px 0 2px; overflow: hidden; border-right: 1px solid #c0c0c0; border-bottom: 1px solid #c0c0c0; text-align: left; line-height: 18px; font-weight: normal; }
.grid th { padding: 0; background: #f0f0f0; text-align: center; }
.grid th.hot { background: linear-gradient(#f8d596, #efbf68); }
.grid .r { text-align: right; }
.grid .c { text-align: center; }
.g-up { width: 100%; }
.g-up thead tr { height: 22px; }
.w21 { width: 21px; } .w23 { width: 23px; } .w34 { width: 34px; } .w42 { width: 42px; } .w55 { width: 55px; } .w60 { width: 60px; } .w62 { width: 62px; } .w65 { width: 65px; } .w71 { width: 71px; } .w81 { width: 81px; } .w88 { width: 88px; } .w119 { width: 119px; } .w122 { width: 122px; } .w127 { width: 127px; } .w268 { width: 268px; }
.total td { background-color: #dfe6f0; }
.grid .total td { font-weight: bold; }
.total .code { background-color: #bfd4ec; }
.grid .total th, .grid .first th { background: #ffd08a; }
.pale td { background-color: #e1f3ff; }
.blue td { background-color: #a9dcfb; }
.grid .code { background-repeat: no-repeat; background-image: linear-gradient(#bdbdbd, #bdbdbd), linear-gradient(#bdbdbd, #bdbdbd), linear-gradient(#bdbdbd, #bdbdbd), linear-gradient(#bdbdbd, #bdbdbd); }
.grid .l0 { padding-left: 3px; background-size: 1px 50%, 0 0, 0 0, 0 0; background-position: 8px 100%; }
.grid .l1 { padding-left: 13px; background-size: 1px 100%, 1px 50%, 5px 1px, 0 0; background-position: 8px 0, 18px 100%, 8px 50%, 0 0; }
.grid .l2 { padding-left: 23px; background-size: 1px 100%, 1px 100%, 1px 50%, 5px 1px; background-position: 8px 0, 18px 0, 28px 100%, 18px 50%; }
.grid .l3 { padding-left: 50px; background-size: 1px 100%, 1px 100%, 1px 100%, 16px 1px; background-position: 8px 0, 18px 0, 28px 0, 28px 50%; }
.grid .l3.last { background-size: 1px 100%, 1px 100%, 1px 50%, 16px 1px; }
.minus { display: inline-block; width: 12px; height: 12px; margin-right: 5px; vertical-align: -2px; border: 1px solid #bbb; background: linear-gradient(#000, #000) center / 6px 1px no-repeat #fff; }

.mid-tabs { display: flex; align-items: center; height: 30px; padding: 8px 2px 0; flex: none; }
.mid-tabs i { width: 1px; height: 20px; margin: 0 11px 0 6px; background: #aaa; }
.sunk { height: 19px; padding: 0 5px; border: 1px solid #777; border-right-color: #fff; border-bottom-color: #fff; background: #f8f8f8; line-height: 17px; }
.lower { display: flex; flex: 1; min-height: 0; }
.lower-main { border: 1px solid #a9a9a9; padding: 1px; background: #fff; }
.vs.low { padding: 4px 0; margin-right: 2px; }
.g-low { width: 929px; }
.g-low thead tr { height: 21px; }
.g-low tbody tr, .g-q tbody tr { height: 19px; }
.g-low td { background: #ffffc0; }
.g-low .first td { background: #d8ebc8; }
.grid td.wide { padding-right: 7px; }
.g-low input { appearance: none; display: block; width: 13px; height: 13px; margin: 0 auto; border: 1px solid #333; background: #fff; }

.ops { width: 128px; padding: 5px 6px 2px 7px; flex: none; }
.btns { display: grid; grid-template-columns: 1fr 1fr; gap: 6px 7px; padding: 0 8px 0 4px; }
.btns button, .dlg-act button { height: 23px; border: 1px solid #bfbfbf; background: #ccc; color: #838383; }
.full { grid-column: 1 / 3; }
fieldset { display: grid; grid-template-columns: 67px 1fr; gap: 7px 0; margin: 3px 0 0; padding: 5px 0 8px 1px; border: 1px solid #dcdcdc; }
legend { margin-left: 4px; padding: 0 2px; }
fieldset label { display: flex; align-items: center; gap: 2px; }
input[type='radio'] { appearance: none; width: 13px; height: 13px; margin: 0; border: 1px solid #333; border-radius: 50%; background: #fff; }
input[type='radio']:checked { background: radial-gradient(circle, #222 0 3px, #fff 4px); }

.status { display: flex; gap: 2px; height: 22px; padding: 2px 0 1px; background: #f0f0f0; flex: none; }
.status span { padding-left: 1px; border: 1px solid #d5d5d5; border-left-color: #fff; background: #f3f3f3; line-height: 18px; overflow: hidden; }
.s0, .s1 { flex: 382; } .s2 { flex: 229; } .s3 { flex: 176; } .s4 { flex: 187; }

.task { display: flex; align-items: center; height: 40px; background: #000c0f; color: #eee; flex: none; }
.start { width: 48px; height: 40px; padding-left: 16px; background: #000; }
.search { display: flex; align-items: center; width: 342px; height: 40px; padding: 0 13px 0 9px; background: #333; }
.search input { flex: 1; min-width: 0; margin: 0 0 0 5px; padding: 0; border: 0; outline: 0; background: none; color: #ccc; font: inherit; }
.search input::placeholder { color: #999; opacity: 1; }
.slot { display: flex; align-items: center; justify-content: center; width: 50px; height: 40px; }
.run { border-bottom: 2px solid #76b9ed; border-top: 2px solid transparent; }
.act { background: #3a4648; }
.push { flex: 1; }
.cpu, .clock { line-height: 18px; text-align: center; }
.cpu { width: 60px; }
.tray { display: flex; align-items: center; gap: 9px; margin: 0 16px 0 13px; }
.note { position: relative; width: 26px; margin: 0 6px 0 26px; }
.note b { position: absolute; left: 12px; top: 14px; color: #fff; }

.dlg { position: absolute; left: 288px; right: 225px; top: 96px; bottom: 158px; display: flex; flex-direction: column; border: 1px solid #2f8ee8; background: #f0f0f0; box-shadow: 2px 4px 16px rgba(0, 0, 0, .4); }
.dlg-title { display: flex; align-items: center; gap: 6px; height: 30px; padding: 0 17px 0 8px; background: #fff; flex: none; }
.dbtns { display: flex; gap: 33px; margin-left: auto; }
.dlg-tabs { display: flex; align-items: center; height: 27px; flex: none; overflow: hidden; }
.dlg-tabs > button { height: 20px; margin-bottom: 5px; padding: 0 11px 0 10px; border-right: 1px solid #aaa; }
.dlg-tabs > .d0 { padding-left: 7px; }
.dlg-tabs > .d1 { padding-right: 17px; }
.dlg-tabs > .d2 { margin: 0 5px 5px; padding: 0 11px 0 5px; border: 1px solid #777; border-right-color: #fff; border-bottom-color: #fff; background: #f8f8f8; }
.dlg-tabs > .d3 { border-left: 1px solid #aaa; }
.dlg-act { display: flex; gap: 5px; margin: 2px -2px 0 auto; }
.dlg-act button { width: 72px; }
.dlg-body { display: flex; flex: 1; min-height: 0; }
.dleft { display: flex; flex-direction: column; width: 219px; padding-right: 3px; flex: none; }
.combo { position: relative; height: 20px; flex: none; }
.combo select { appearance: none; width: 100%; height: 20px; margin: 0; padding: 0 0 0 3px; border: 1px solid #adadad; border-radius: 0; background: #e1e1e1; color: #000; font: inherit; }
.combo svg { position: absolute; right: 5px; top: 6px; }
.qtabs { display: flex; align-items: flex-end; height: 22px; padding-top: 2px; flex: none; }
.qtabs button { height: 18px; padding: 0 4px; border: 1px solid #d5d5d5; border-bottom: 0; }
.qtabs .cur { height: 20px; padding: 0 7px; background: #fff; }
.page { display: flex; flex-direction: column; flex: 1; min-height: 0; margin-right: 1px; padding: 3px 1px 2px 4px; border-top: 1px solid #dcdcdc; border-right: 2px solid #dcdcdc; background: #fff; }
.tbox { display: flex; flex-direction: column; flex: 1; min-height: 0; border: 1px solid #828790; }
.tmain { display: flex; flex: 1; min-height: 0; padding: 1px 3px 0 4px; }
.qtree { flex: 1; min-width: 0; overflow: hidden; }
.qtree li { display: flex; align-items: center; height: 16px; }
.guide { width: 19px; height: 16px; flex: none; background: repeating-linear-gradient(#999 0 1px, transparent 1px 2px) 9px 0 / 1px 16px no-repeat; }
.tw { width: 19px; height: 16px; }
.qtree span { padding-left: 1px; line-height: 16px; }
.qtree .sel { margin-left: -4px; padding: 0 4px 0 5px; background: #cce8ff; }
.vs.dl { width: 15px; }
.th4 { height: 286px; }
.hs.dl { margin: 0 3px 1px 1px; padding-right: 19px; }
.scope { display: flex; gap: 21px; height: 36px; margin-top: 3px; padding: 0 0 4px 11px; background: #f0f0f0; flex: none; }
.scope label { display: flex; align-items: center; gap: 8px; }
.scope input { width: 11px; height: 11px; border-color: #999; }
.dright { flex: 1; min-width: 0; overflow: hidden; padding: 1px; border: 1px solid #a0a0a0; border-right: 0; background: #fff; }
.g-q { width: 554px; }
.g-q thead tr { height: 21px; }
.g-q .first td:nth-child(2) { background: #d9eaf8; }
.marks { position: absolute; left: 0; top: 0; pointer-events: none; }

.speed { position: absolute; left: 734px; top: 10px; display: flex; align-items: center; width: 126px; height: 46px; font-size: 11px; }
.speed::before { content: ''; position: absolute; left: 12px; right: 0; top: 5px; bottom: 3px; border: 1px solid #bbb; border-radius: 19px; background: linear-gradient(#f4f4f4, #dcdcdc); box-shadow: 0 1px 4px rgba(0, 0, 0, .4); }
.ball { position: relative; width: 46px; height: 46px; border: 2px solid #eee; border-radius: 50%; background: linear-gradient(#2f8458 0 25%, #3fcf62 25% 100%); box-shadow: 0 0 2px #555; color: #fff; font-size: 14px; line-height: 42px; text-align: center; flex: none; }
.rates { position: relative; flex: 1; line-height: 15px; margin-left: 5px; }
.rates span { display: flex; justify-content: space-between; align-items: center; height: 15px; }
.rates em { color: #1e9b4b; font: bold 12px/15px "DejaVu Sans", sans-serif; }
.rates .u { color: #e8533a; }
.speed > svg { position: relative; margin: -2px 3px 0 5px; }
.ime { position: absolute; left: 992px; top: 3px; display: flex; align-items: center; gap: 7px; width: 182px; height: 24px; padding-left: 30px; border: 1px solid #a9bfd6; background: #fdfdfe; color: #1b76c9; font-size: 15px; }
.ime svg, .ime b { margin-right: -1px; }
.ime .logo { position: absolute; left: -5px; top: -4px; margin: 0; }
</style>
